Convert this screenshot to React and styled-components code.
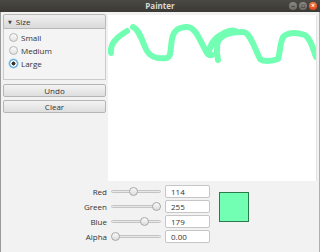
import React from 'react';
import styled, { createGlobalStyle } from 'styled-components';

const GlobalStyle = createGlobalStyle`
  html, body {
    margin: 0;
    padding: 0;
    background: #f2f2f2;
  }
  body {
    font-family: "Open Sans", "DejaVu Sans", sans-serif;
    font-size: 8px;
    color: #333;
  }
`;

const channels = [
  { name: 'Red', value: 114, max: 255, text: '114' },
  { name: 'Green', value: 255, max: 255, text: '255' },
  { name: 'Blue', value: 179, max: 255, text: '179' },
  { name: 'Alpha', value: 0, max: 1, text: '0.00' },
];

const sizes = ['Small', 'Medium', 'Large'];

const App = () => {
  return (
    <Window>
      <GlobalStyle />
      <TitleBar>
        <Title>Painter</Title>
        <WindowButtons>
          <WinButton>–</WinButton>
          <WinButton>▫</WinButton>
          <WinButton $close>×</WinButton>
        </WindowButtons>
      </TitleBar>
      <Body>
        <TopRow>
          <Sidebar>
            <TitledPane>
              <PaneHeader>
                <Arrow>▼</Arrow>Size
              </PaneHeader>
              <PaneContent>
                {sizes.map((s) => (
                  <RadioRow key={s}>
                    <Radio $checked={s === 'Large'} />
                    {s}
                  </RadioRow>
                ))}
              </PaneContent>
            </TitledPane>
            <Button>Undo</Button>
            <Button>Clear</Button>
          </Sidebar>
          <Canvas>
            <svg width="208" height="166" viewBox="0 0 208 166">
              <g
                fill="none"
                stroke="#72ffb3"
                strokeWidth="6"
                strokeLinecap="round"
                strokeLinejoin="round"
              >
                <path d="M3 38 C2 30 6 24 19 16" />
                <path d="M25 12 C30 14 33 22 37 32 C41 42 48 44 58 43 C64 42 62 34 64 24 C66 14 72 12 79 12 C88 12 92 26 99 38 C101 41 103 40 104 40" />
                <path d="M101 36 C104 24 112 18 124 17 C132 16 124 14 116 18 C108 22 108 36 110 45" />
                <path d="M108 30 C112 20 120 17 135 17 C142 17 146 32 152 44 C156 47 164 46 170 44 C172 38 172 28 175 22 C180 17 188 17 197 20 C203 24 205 34 208 42" />
              </g>
            </svg>
          </Canvas>
        </TopRow>
        <Controls>
          <ChannelGrid>
            {channels.map((c, i) => (
              <React.Fragment key={c.name}>
                <Label style={{ gridRow: i + 1 }}>{c.name}</Label>
                <Slider style={{ gridRow: i + 1 }}>
                  <Track />
                  <Thumb style={{ left: `${(c.value / c.max) * 41}px` }} />
                </Slider>
                <Field style={{ gridRow: i + 1 }}>{c.text}</Field>
              </React.Fragment>
            ))}
            <Swatch $color="rgb(114,255,179)" />
          </ChannelGrid>
        </Controls>
      </Body>
    </Window>
  );
};

export default App;

const Window = styled.div`
  width: 320px;
  height: 252px;
  display: flex;
  flex-direction: column;
  overflow: hidden;
`;

const TitleBar = styled.header`
  height: 12px;
  flex: none;
  background: linear-gradient(#4a4944, #3a3935);
  position: relative;
  display: flex;
  align-items: center;
  justify-content: center;
`;

const Title = styled.div`
  color: #dcd9d2;
  font-weight: bold;
  font-size: 8px;
  line-height: 12px;
`;

const WindowButtons = styled.div`
  position: absolute;
  right: 3px;
  top: 2px;
  display: flex;
  gap: 2px;
`;

const WinButton = styled.div`
  width: 8px;
  height: 8px;
  border-radius: 50%;
  background: ${(p) => (p.$close ? 'linear-gradient(#f07a4c, #e1461a)' : 'linear-gradient(#8a8883, #6d6b66)')};
  color: ${(p) => (p.$close ? '#fff' : '#3a3935')};
  font-size: 7px;
  line-height: 8px;
  text-align: center;
  font-weight: bold;
`;

const Body = styled.main`
  flex: 1;
  display: flex;
  flex-direction: column;
  background: #f2f2f2;
  border-left: 1px solid #9a9a9a;
  border-right: 1px solid #b0b0b0;
`;

const TopRow = styled.div`
  display: flex;
  padding: 2px 2px 0 2px;
  gap: 2px;
`;

const Sidebar = styled.aside`
  width: 103px;
  display: flex;
  flex-direction: column;
  gap: 3px;
`;

const TitledPane = styled.section`
  display: flex;
  flex-direction: column;
  margin-bottom: 1px;
`;

const PaneHeader = styled.div`
  height: 13px;
  border: 1px solid #b8b8b8;
  border-radius: 2px 2px 0 0;
  background: linear-gradient(#efefef, #dadada);
  display: flex;
  align-items: center;
  padding-left: 4px;
  color: #333;
`;

const Arrow = styled.span`
  font-size: 5px;
  margin-right: 4px;
  color: #444;
`;

const PaneContent = styled.div`
  border: 1px solid #cbcbcb;
  border-top: none;
  background: #f4f4f4;
  height: 46px;
  padding: 4px 0 0 5px;
  display: flex;
  flex-direction: column;
  gap: 4px;
`;

const RadioRow = styled.label`
  display: flex;
  align-items: center;
  gap: 3px;
  height: 9px;
  color: #333;
`;

const Radio = styled.span`
  width: 9px;
  height: 9px;
  box-sizing: border-box;
  border-radius: 50%;
  border: 1px solid ${(p) => (p.$checked ? '#3a9ad6' : '#b5b5b5')};
  background: ${(p) =>
    p.$checked
      ? 'radial-gradient(circle, #333 0 1.8px, #f4f4f4 2.2px)'
      : 'linear-gradient(#fbfbfb, #e2e2e2)'};
  box-shadow: ${(p) => (p.$checked ? '0 0 0 0.5px #8cc6ea' : 'none')};
`;

const Button = styled.button`
  height: 13px;
  padding: 0;
  border: 1px solid #b5b5b5;
  border-radius: 2px;
  background: linear-gradient(#f3f3f3, #dedede);
  font-family: inherit;
  font-size: 8px;
  color: #333;
  line-height: 11px;
`;

const Canvas = styled.div`
  width: 208px;
  height: 166px;
  background: #fff;
  border-right: 1px solid #e4e4e4;
  margin-top: 1px;
`;

const Controls = styled.footer`
  padding-top: 4px;
`;

const ChannelGrid = styled.div`
  display: grid;
  grid-template-columns: 106px 50px 45px 30px;
  grid-auto-rows: 13px;
  column-gap: 4px;
  row-gap: 2px;
  align-items: center;
`;

const Label = styled.div`
  grid-column: 1;
  text-align: right;
  color: #333;
`;

const Slider = styled.div`
  grid-column: 2;
  position: relative;
  height: 9px;
  display: flex;
  align-items: center;
`;

const Track = styled.div`
  width: 100%;
  height: 3px;
  border-radius: 2px;
  border: 1px solid #c4c4c4;
  background: #e8e8e8;
  box-sizing: border-box;
`;

const Thumb = styled.div`
  position: absolute;
  top: 0;
  width: 9px;
  height: 9px;
  box-sizing: border-box;
  border-radius: 50%;
  border: 1px solid #a8a8a8;
  background: linear-gradient(#fafafa, #dcdcdc);
`;

const Field = styled.div`
  grid-column: 3;
  height: 13px;
  box-sizing: border-box;
  border: 1px solid #c6c6c6;
  border-radius: 2px;
  background: #fff;
  padding-left: 5px;
  line-height: 11px;
  color: #333;
`;

const Swatch = styled.div`
  grid-column: 4;
  grid-row: 1 / span 4;
  align-self: start;
  margin-top: 7px;
  margin-left: 5px;
  width: 30px;
  height: 30px;
  box-sizing: border-box;
  border: 1px solid #2a7a4c;
  background: ${(p) => p.$color};
`;
